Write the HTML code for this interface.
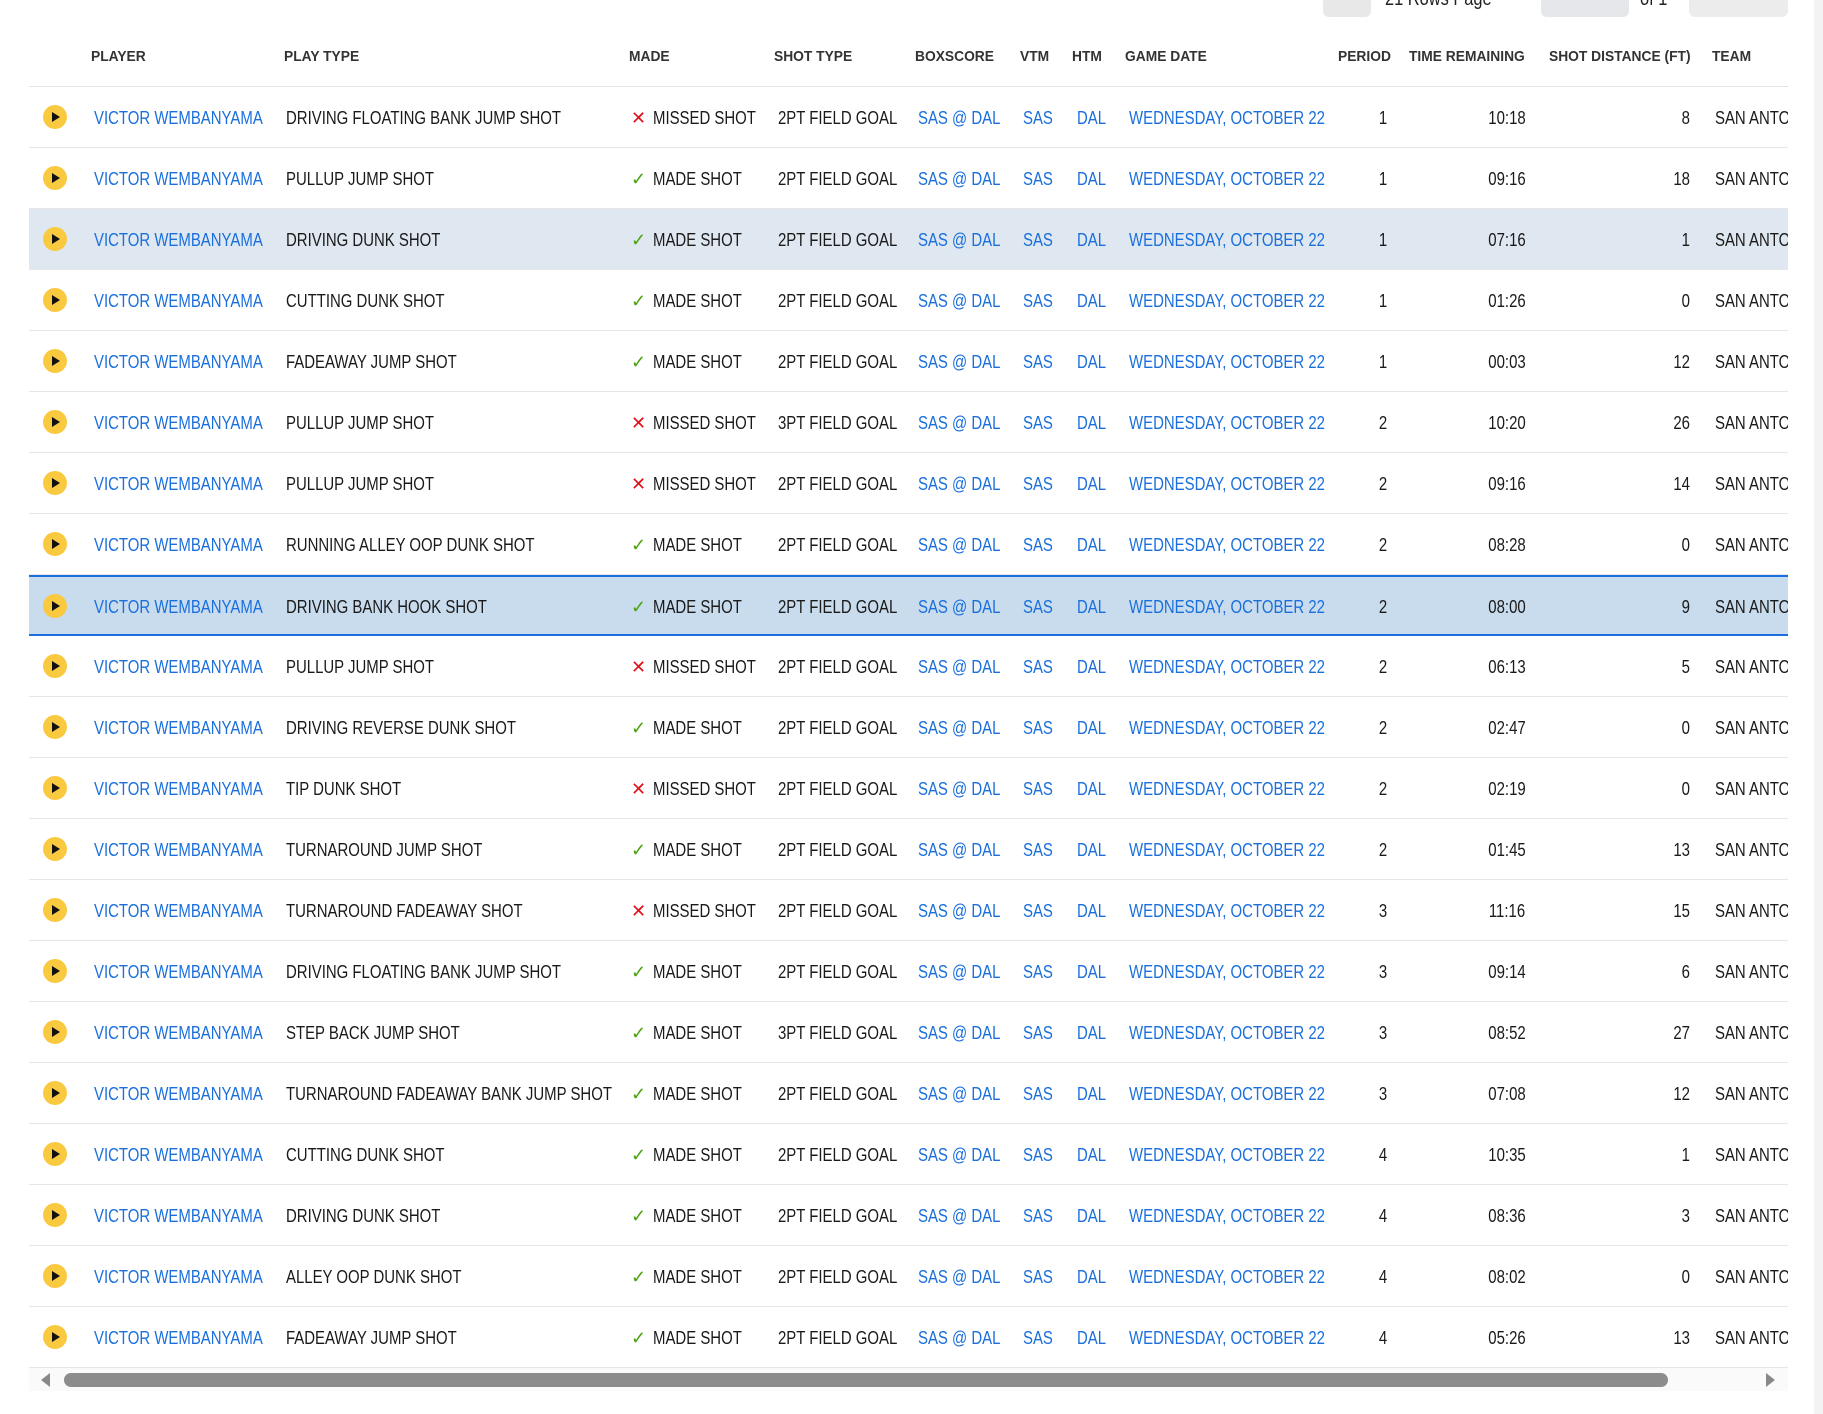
<!DOCTYPE html>
<html><head><meta charset="utf-8"><style>
*{margin:0;padding:0;box-sizing:border-box}
body{width:1823px;height:1414px;background:#fff;position:relative;overflow:hidden;font-family:"Liberation Sans",sans-serif;color:#1a1a1a}
.hd{position:absolute;top:0;left:29px;width:1759px;height:87px;border-bottom:1px solid #e3e3e3}
.hd span{position:absolute;top:48px;font-size:15px;font-weight:bold;color:#333;white-space:nowrap;transform:scaleX(0.92);transform-origin:0 0}
.r{position:absolute;left:29px;width:1759px;height:61px;border-bottom:1px solid #e6e6e6;font-size:18px;white-space:nowrap;overflow:hidden}
.r span{position:absolute;top:21px;line-height:20px;transform:scaleX(0.83);transform-origin:0 0}
.s1{background:#dfe7f0}
.s2{background:#c8dcee;border-top:2px solid #1a6ee0;border-bottom:2px solid #1a6ee0}
.s2 span{top:20px}
.b{color:#1a6fdc}
.pl{position:absolute;left:14px;top:18px;width:24px;height:24px;border-radius:50%;background:#f9c940}
.pl:after{content:"";position:absolute;left:9px;top:7px;border-left:8px solid #111;border-top:5px solid transparent;border-bottom:5px solid transparent}
.s2 .pl{top:17px}
.r span.x,.r span.c{transform:none}
.x{color:#e0101a}.c{color:#4aa310}
.r span.pd{text-align:center;width:20px;transform-origin:50% 0}
.r span.tm{text-align:center;width:60px;transform-origin:50% 0}
.r span.ds{text-align:right;width:40px;transform-origin:100% 0}
.btn{position:absolute;top:-10px;height:27px;background:#e8e8e8;border-radius:6px}
.tp{position:absolute;top:-12px;font-size:20px;color:#222;transform:scaleX(0.82);transform-origin:0 0;white-space:nowrap}
</style></head><body>
<div class="btn" style="left:1323px;width:48px"></div>
<span class="tp" style="left:1385px">21 Rows Page</span>
<div class="btn" style="left:1541px;width:88px;background:#e6e7ea"></div>
<span class="tp" style="left:1640px">of 1</span>
<div class="btn" style="left:1689px;width:99px;background:#ececec"></div>
<div style="position:absolute;left:1814px;top:0;width:9px;height:1414px;background:#f3f3f3"></div>
<div class="hd">
<span style="left:62px">PLAYER</span><span style="left:255px">PLAY TYPE</span><span style="left:600px">MADE</span><span style="left:745px">SHOT TYPE</span><span style="left:886px">BOXSCORE</span><span style="left:991px">VTM</span><span style="left:1043px">HTM</span><span style="left:1096px">GAME DATE</span><span style="left:1309px">PERIOD</span><span style="left:1380px">TIME REMAINING</span><span style="left:1520px">SHOT DISTANCE (FT)</span><span style="left:1683px">TEAM</span>
</div>
<div id="rows"></div>
<div style="position:absolute;left:29px;top:1368px;width:1759px;height:23px;background:#fafafa"></div>
<div style="position:absolute;left:41px;top:1373px;border-right:9px solid #888;border-top:7px solid transparent;border-bottom:7px solid transparent"></div>
<div style="position:absolute;left:64px;top:1373px;width:1604px;height:14px;border-radius:7px;background:#8c8c8c"></div>
<div style="position:absolute;left:1766px;top:1373px;border-left:9px solid #888;border-top:7px solid transparent;border-bottom:7px solid transparent"></div>
<script>
var d=[
["DRIVING FLOATING BANK JUMP SHOT",0,2,1,"10:18",8],
["PULLUP JUMP SHOT",1,2,1,"09:16",18],
["DRIVING DUNK SHOT",1,2,1,"07:16",1],
["CUTTING DUNK SHOT",1,2,1,"01:26",0],
["FADEAWAY JUMP SHOT",1,2,1,"00:03",12],
["PULLUP JUMP SHOT",0,3,2,"10:20",26],
["PULLUP JUMP SHOT",0,2,2,"09:16",14],
["RUNNING ALLEY OOP DUNK SHOT",1,2,2,"08:28",0],
["DRIVING BANK HOOK SHOT",1,2,2,"08:00",9],
["PULLUP JUMP SHOT",0,2,2,"06:13",5],
["DRIVING REVERSE DUNK SHOT",1,2,2,"02:47",0],
["TIP DUNK SHOT",0,2,2,"02:19",0],
["TURNAROUND JUMP SHOT",1,2,2,"01:45",13],
["TURNAROUND FADEAWAY SHOT",0,2,3,"11:16",15],
["DRIVING FLOATING BANK JUMP SHOT",1,2,3,"09:14",6],
["STEP BACK JUMP SHOT",1,3,3,"08:52",27],
["TURNAROUND FADEAWAY BANK JUMP SHOT",1,2,3,"07:08",12],
["CUTTING DUNK SHOT",1,2,4,"10:35",1],
["DRIVING DUNK SHOT",1,2,4,"08:36",3],
["ALLEY OOP DUNK SHOT",1,2,4,"08:02",0],
["FADEAWAY JUMP SHOT",1,2,4,"05:26",13]];
var h="";
d.forEach(function(r,i){
var cls=i==2?" s1":(i==8?" s2":"");
h+='<div class="r'+cls+'" style="top:'+(87+i*61)+'px"><div class="pl"></div>'+
'<span class="b" style="left:65px">VICTOR WEMBANYAMA</span>'+
'<span style="left:257px">'+r[0]+'</span>'+
(r[1]?'<span class="c" style="left:602px">&#10003;</span><span style="left:624px">MADE SHOT</span>':'<span class="x" style="left:602px">&#10005;</span><span style="left:624px">MISSED SHOT</span>')+
'<span style="left:749px">'+r[2]+'PT FIELD GOAL</span>'+
'<span class="b" style="left:889px">SAS @ DAL</span>'+
'<span class="b" style="left:994px">SAS</span>'+
'<span class="b" style="left:1048px">DAL</span>'+
'<span class="b" style="left:1100px">WEDNESDAY, OCTOBER 22</span>'+
'<span class="pd" style="left:1344px">'+r[3]+'</span>'+
'<span class="tm" style="left:1448px">'+r[4]+'</span>'+
'<span class="ds" style="left:1621px">'+r[5]+'</span>'+
'<span style="left:1686px">SAN ANTONIO SPURS</span></div>';
});
document.getElementById("rows").innerHTML=h;
</script>
</body></html>
